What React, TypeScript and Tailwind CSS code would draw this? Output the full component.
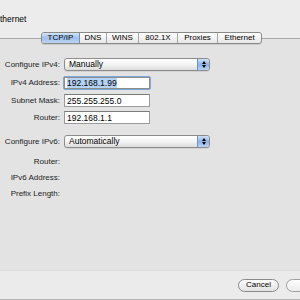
const tabs = ['TCP/IP', 'DNS', 'WINS', '802.1X', 'Proxies', 'Ethernet'];
const tabWidths = ['w-[38px]', 'w-[27px]', 'w-[32px]', 'w-[39px]', 'w-[40px]', 'w-[43px]'];

function Stepper() {
  return (
    <div className="w-[12px] h-full flex flex-col items-center justify-center gap-[1px] bg-gradient-to-b from-[#cfe0f7] via-[#8db3e8] to-[#b9d2f3] border-l border-[#6d8fc4] rounded-r-[3px]">
      <div className="w-0 h-0 border-l-[2px] border-r-[2px] border-b-[3px] border-l-transparent border-r-transparent border-b-black" />
      <div className="w-0 h-0 border-l-[2px] border-r-[2px] border-t-[3px] border-l-transparent border-r-transparent border-t-black" />
    </div>
  );
}

function Popup({ value }: { value: string }) {
  return (
    <div className="w-[146px] h-[13px] flex rounded-[3px] border border-[#8c8c8c] bg-gradient-to-b from-white via-[#f4f4f4] to-[#dcdcdc] shadow-[0_1px_0_rgba(0,0,0,0.08)]">
      <div className="flex-1 pl-[4px] text-[8.5px] leading-[11px] text-black">{value}</div>
      <Stepper />
    </div>
  );
}

function Field({ value, focused }: { value: string; focused?: boolean }) {
  if (focused) {
    return (
      <div className="w-[88px] h-[14px] -ml-[1px] rounded-[2px] border-[1.5px] border-[#7ea6d8] p-[0px]">
        <div className="h-full bg-white border border-[#8e8e8e] pl-[2px] flex items-center">
          <span className="bg-[#b5d3f7] text-[8.5px] leading-[10px] text-black">{value}</span>
        </div>
      </div>
    );
  }
  return (
    <div className="w-[86px] h-[13px] bg-white border border-[#9b9b9b] border-t-[#7b7b7b] pl-[2px] flex items-center text-[8.5px] leading-[10px] text-black">
      {value}
    </div>
  );
}

function Row({ label, className, children }: { label: string; className?: string; children?: React.ReactNode }) {
  return (
    <div className={`flex items-center h-[13px] ${className ?? ''}`}>
      <div className="w-[61px] text-right pr-[1px] text-[8px] leading-[10px] text-[#1c1c1c]">{label}</div>
      <div className="ml-[3px]">{children}</div>
    </div>
  );
}

export default function App() {
  return (
    <div
      className="w-[300px] h-[300px] overflow-hidden flex flex-col bg-[#ececec]"
      style={{ fontFamily: '"Liberation Sans", Arial, sans-serif' }}
    >
      <div className="h-[32px] pt-[14px] text-[8.5px] leading-[10px] text-black">thernet</div>

      <div className="relative z-10 flex ml-[41px] h-[12px] rounded-[3px] border border-[#8a8a8a] w-max bg-gradient-to-b from-white to-[#e6e6e6] shadow-[0_1px_0_rgba(0,0,0,0.1)]">
        {tabs.map((t, i) => (
          <div
            key={t}
            className={`${tabWidths[i]} h-full flex items-center justify-center text-[8px] leading-[10px] text-black ${
              i === 0
                ? 'bg-gradient-to-b from-[#d3e4f8] via-[#9fc0ec] to-[#bcd5f4] rounded-l-[2px] border-r border-[#6e8fc2]'
                : i < tabs.length - 1
                ? 'border-r border-[#a6a6a6]'
                : ''
            }`}
          >
            {t}
          </div>
        ))}
      </div>

      <div className="-mt-[6px] h-[232px] bg-[#e3e3e3] border-t border-[#a9a9a9] pt-[19px] flex flex-col">
        <Row label="Configure IPv4:">
          <Popup value="Manually" />
        </Row>
        <Row label="IPv4 Address:" className="mt-[5px]">
          <Field value="192.168.1.99" focused />
        </Row>
        <Row label="Subnet Mask:" className="mt-[5px]">
          <Field value="255.255.255.0" />
        </Row>
        <Row label="Router:" className="mt-[4px]">
          <Field value="192.168.1.1" />
        </Row>
        <Row label="Configure IPv6:" className="mt-[11px]">
          <Popup value="Automatically" />
        </Row>
        <Row label="Router:" className="mt-[7px]" />
        <Row label="IPv6 Address:" className="mt-[3px]" />
        <Row label="Prefix Length:" className="mt-[3px]" />
      </div>

      <div className="h-[29px] bg-[#ebebeb] border-t border-[#dcdcdc] flex items-center pl-[238px] gap-[7px]">
        <div className="w-[41px] h-[13px] shrink-0 rounded-full border border-[#8a8a8a] bg-gradient-to-b from-white to-[#e2e2e2] flex items-center justify-center text-[8px] leading-[10px] text-black">
          Cancel
        </div>
        <div className="w-[41px] h-[13px] shrink-0 rounded-full border border-[#a0a0a0] bg-gradient-to-b from-white to-[#ececec]" />
      </div>

      <div className="h-[1px] bg-[#b4b4b4]" />
      <div className="flex-1 bg-black" />
    </div>
  );
}
